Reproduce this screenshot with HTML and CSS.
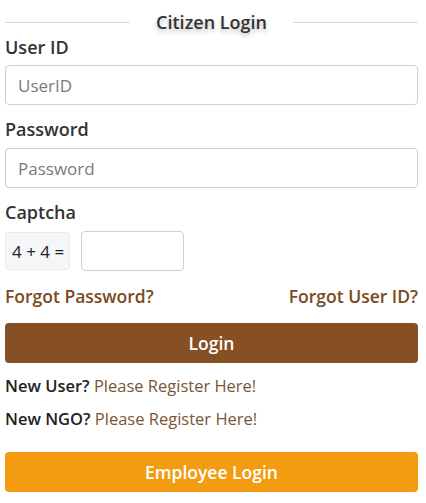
FILE: index.html
```html
<!DOCTYPE html>
<html lang="en">
<head>
<meta charset="utf-8">
<title>Citizen Login</title>
<link rel="stylesheet" href="styles.css">
</head>
<body>
<div class="login">
  <div class="title-row">
    <span class="line"></span>
    <h2 class="title">Citizen Login</h2>
    <span class="line"></span>
  </div>

  <label class="label label-first" for="uid">User ID</label>
  <input class="field" id="uid" type="text" placeholder="UserID">

  <label class="label" for="pwd">Password</label>
  <input class="field" id="pwd" type="password" placeholder="Password">

  <label class="label" for="cap">Captcha</label>
  <div class="captcha-row">
    <span class="captcha-q">4 + 4 =</span>
    <input class="captcha-in" id="cap" type="text">
  </div>

  <div class="forgot-row">
    <a class="forgot" href="#">Forgot Password?</a>
    <a class="forgot" href="#">Forgot User ID?</a>
  </div>

  <button class="btn btn-login" type="button">Login</button>

  <p class="reg reg-user">New User? <a href="#">Please Register Here!</a></p>
  <p class="reg reg-ngo">New NGO? <a href="#">Please Register Here!</a></p>

  <button class="btn btn-emp" type="button">Employee Login</button>
</div>
</body>
</html>
```

FILE: styles.css
```css
* { box-sizing: border-box; }
html, body { margin: 0; padding: 0; background: #fff; }
body {
  font-family: "Open Sans", "Noto Sans", sans-serif;
  color: #333;
}
.login {
  width: 426px;
  padding: 0 8px 0 5px;
  display: flex;
  flex-direction: column;
}
.title-row {
  display: flex;
  align-items: center;
  gap: 26px;
  margin-top: 10px;
  height: 24px;
}
.line {
  flex: 1;
  height: 1px;
  background: #d6d6d6;
}
.title {
  margin: 0;
  font-size: 18px;
  font-weight: 600;
  line-height: 24px;
  color: #333;
  text-shadow: 0 3px 4px rgba(0,0,0,0.25);
}
.label {
  display: block;
  font-size: 18px;
  font-weight: 600;
  line-height: 24px;
  color: #333;
  margin: 12px 0 7px;
}
.label-first { margin-top: 1px; margin-bottom: 6px; }
.field {
  display: block;
  width: 100%;
  height: 40px;
  border: 1px solid #cfcfcf;
  border-radius: 4px;
  padding: 0 12px;
  font-family: inherit;
  font-size: 17px;
  color: #555;
  background: #fff;
}
.field::placeholder { color: #7a7a7a; }
.captcha-row {
  display: flex;
  align-items: center;
  gap: 11px;
  height: 40px;
}
.captcha-q {
  display: flex;
  align-items: center;
  width: 65px;
  height: 38px;
  padding-left: 6px;
  background: #f4f6f8;
  border: 1px solid #e8ebee;
  border-radius: 3px;
  font-size: 17px;
  color: #222;
}
.captcha-in {
  width: 103px;
  height: 40px;
  border: 1px solid #cfcfcf;
  border-radius: 4px;
  background: #fff;
}
.forgot-row {
  display: flex;
  justify-content: space-between;
  margin-top: 13px;
  line-height: 24px;
}
.forgot {
  font-size: 17.5px;
  font-weight: 600;
  color: #7b4a22;
  text-decoration: none;
}
.btn {
  display: block;
  width: 100%;
  height: 40px;
  border: none;
  border-radius: 4px;
  color: #fff;
  font-family: inherit;
  font-size: 17.5px;
  font-weight: 600;
}
.btn-login {
  background: #874f24;
  margin-top: 15px;
}
.btn-emp {
  background: #f39c12;
  margin-top: 21px;
}
.reg {
  margin: 11px 0 0;
  font-size: 16.5px;
  font-weight: 600;
  line-height: 24px;
  color: #222;
}
.reg-ngo { margin-top: 9px; }
.reg a {
  color: #7b5535;
  font-weight: 500;
  text-decoration: none;
}
```
